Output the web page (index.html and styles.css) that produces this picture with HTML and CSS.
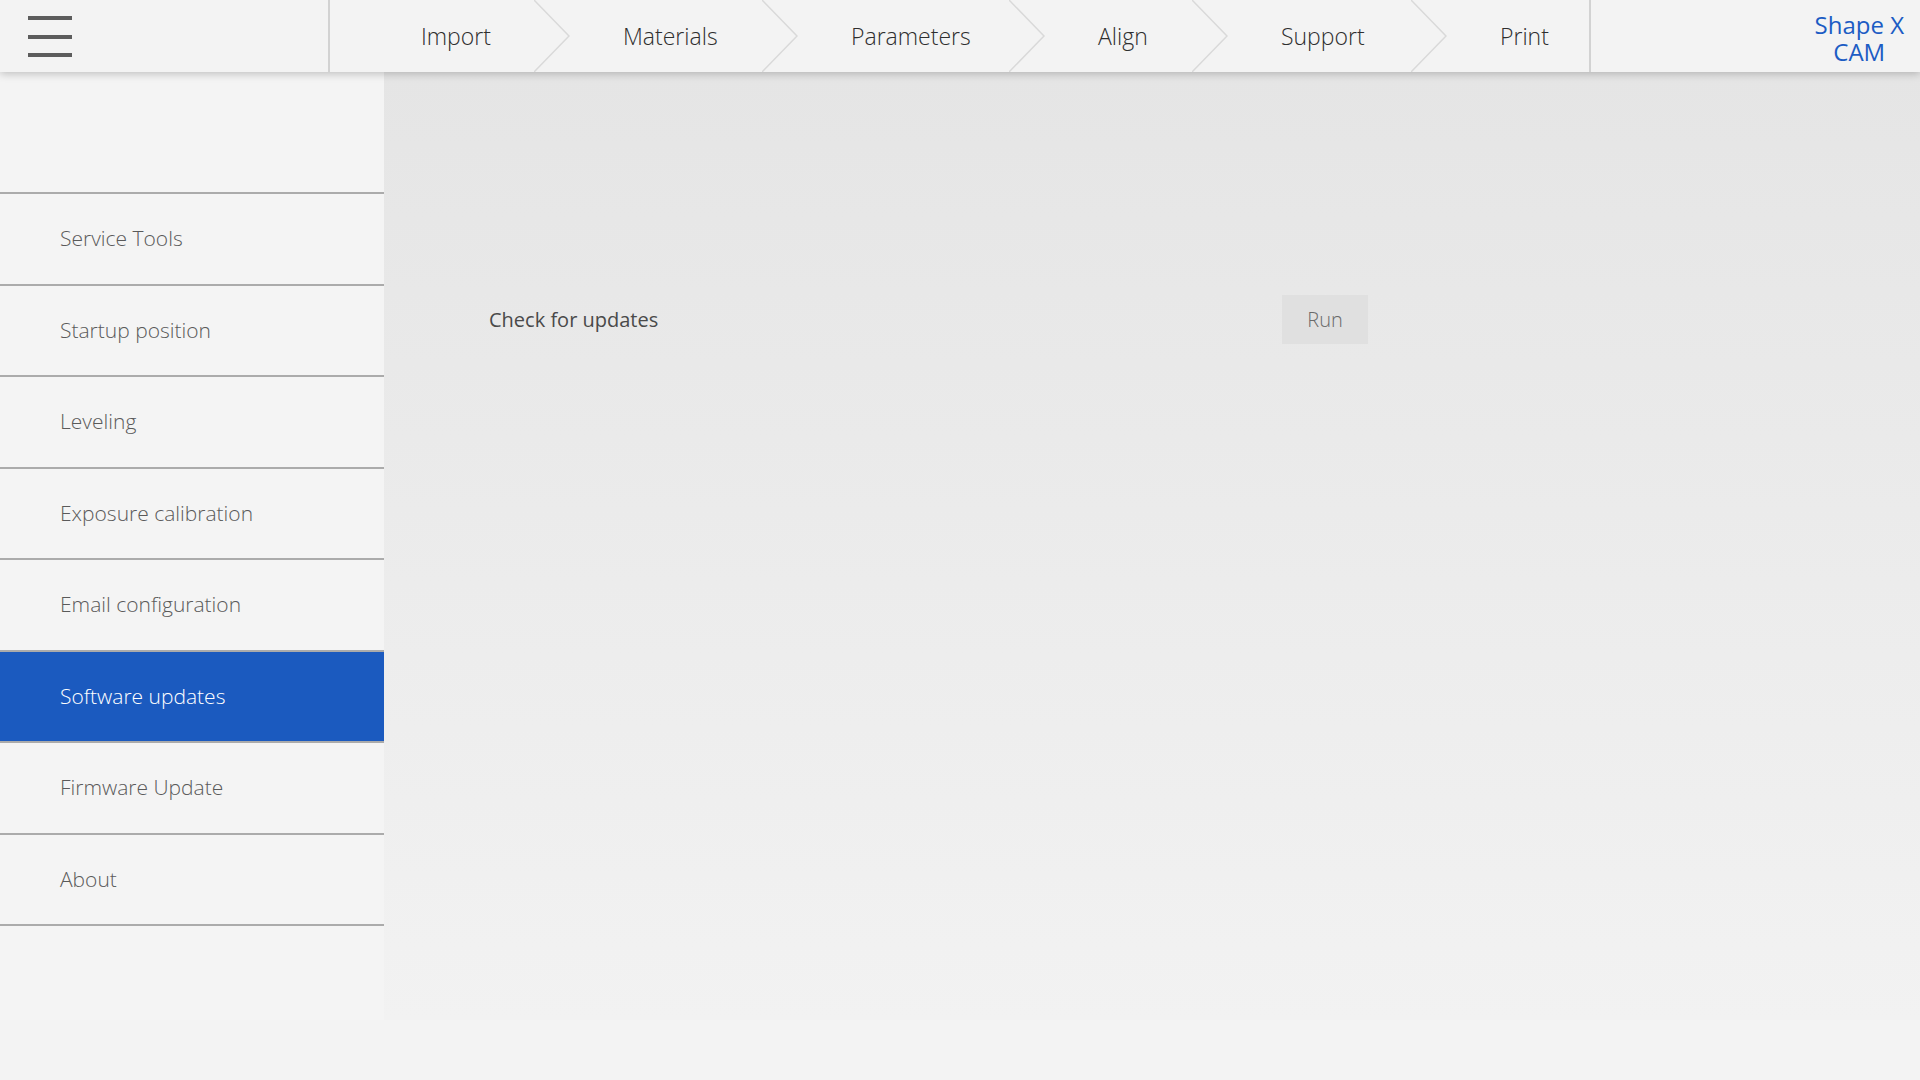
FILE: index.html
```html
<html>
  <head>
    <title>Shape X CAM - Software updates</title>
    <link rel="stylesheet" href="styles.css">
  </head>
  <body>
    <header class="topbar">
      <div class="menu">
        <svg class="burger" width="44" height="41" viewBox="0 0 44 41">
          <rect x="0" y="0" width="44" height="4" />
          <rect x="0" y="19" width="44" height="4" />
          <rect x="0" y="37" width="44" height="4" />
        </svg>
      </div>
      <nav class="steps">
        <span class="step">Import</span>
        <svg class="chevron" viewBox="0 0 36 72"><polyline points="0,0 35,36 0,72" /></svg>
        <span class="step">Materials</span>
        <svg class="chevron" viewBox="0 0 36 72"><polyline points="0,0 35,36 0,72" /></svg>
        <span class="step">Parameters</span>
        <svg class="chevron" viewBox="0 0 36 72"><polyline points="0,0 35,36 0,72" /></svg>
        <span class="step">Align</span>
        <svg class="chevron" viewBox="0 0 36 72"><polyline points="0,0 35,36 0,72" /></svg>
        <span class="step">Support</span>
        <svg class="chevron" viewBox="0 0 36 72"><polyline points="0,0 35,36 0,72" /></svg>
        <span class="step">Print</span>
      </nav>
      <div class="brand">
        <div class="brand-name">
          <span class="brand-line">Shape X</span>
          <span class="brand-line">CAM</span>
        </div>
      </div>
    </header>

    <div class="page">
      <aside class="sidebar">
        <ul class="sections">
          <li>Service Tools</li>
          <li>Startup position</li>
          <li>Leveling</li>
          <li>Exposure calibration</li>
          <li>Email configuration</li>
          <li class="active">Software updates</li>
          <li>Firmware Update</li>
          <li>About</li>
        </ul>
      </aside>

      <main class="content">
        <div class="setting">
          <span class="label">Check for updates</span>
          <button class="run">Run</button>
        </div>
      </main>
    </div>
  </body>
</html>
```

FILE: styles.css
```css
body {
    margin: 0;
    background: #f3f3f3;
    font-family: "Open Sans", "Noto Sans", sans-serif;
}

.topbar {
    display: flex;
    height: 72px;
    background: #f3f3f3;
    box-shadow: 0 2px 8px rgba(0, 0, 0, 0.22);
    position: relative;
    z-index: 2;
}

.menu {
    flex-shrink: 0;
    width: 300px;
    padding-left: 28px;
    border-right: 2px solid #d2d2d2;
    display: flex;
    align-items: center;
}

.burger rect {
    fill: #5c5c5c;
}

.steps {
    flex-shrink: 0;
    display: grid;
    grid-template-columns: 204px 36px 192px 36px 211px 36px 147px 36px 183px 36px 142px;
    border-right: 2px solid #d2d2d2;
}

.step {
    padding-left: 53px;
    font-size: 23px;
    font-weight: 300;
    line-height: 72px;
    color: #2e2e2e;
    white-space: nowrap;
}

.step:first-child {
    padding-left: 91px;
}

.chevron {
    width: 36px;
    height: 72px;
}

.chevron polyline {
    fill: none;
    stroke: #d9d9d9;
    stroke-width: 1.5;
}

.brand {
    flex: 1;
    display: flex;
    justify-content: flex-end;
    padding-right: 16px;
    padding-top: 13px;
    color: #1c5cc4;
}

.brand-name {
    display: flex;
    flex-direction: column;
    align-items: center;
}

.brand-line {
    font-size: 24px;
    line-height: 24px;
    height: 27px;
}

.page {
    display: flex;
}

.sidebar {
    width: 384px;
    padding-top: 120px;
    background: #f4f4f4;
}

.sections {
    list-style: none;
    margin: 0;
    padding: 0;
    border-bottom: 2px solid #ababab;
}

.sections li {
    height: 89.5px;
    line-height: 89.5px;
    padding-left: 60px;
    border-top: 2px solid #ababab;
    font-size: 21px;
    font-weight: 300;
    color: #5a5a5a;
}

.sections li.active {
    background: #1b5abf;
    color: #ffffff;
}

.content {
    flex: 1;
    height: 948px;
    padding: 223px 0 0 105px;
    box-sizing: border-box;
    background: linear-gradient(#e5e5e5, #f2f2f2);
}

.setting {
    display: flex;
    align-items: center;
}

.label {
    width: 793px;
    font-size: 20px;
    color: #4a4a4a;
}

.run {
    width: 86px;
    height: 49px;
    border: none;
    background: #e0e0e0;
    font-family: "Open Sans", "Noto Sans", sans-serif;
    font-size: 20px;
    font-weight: 300;
    color: #6a6a6a;
}
```
